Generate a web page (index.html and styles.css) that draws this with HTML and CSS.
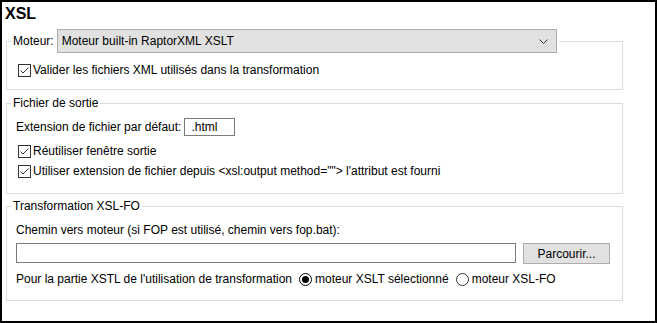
FILE: index.html
```
<!DOCTYPE html>
<html lang="fr">
<head>
  <meta charset="UTF-8" />
  <title>XSL</title>
  <link rel="stylesheet" href="styles.css">
</head>
<body>
  <div class="panel">
    <h1 class="title">XSL</h1>

    <fieldset class="group group-engine">
      <legend class="legend-engine">
        <span>Moteur:</span>
        <div class="combo">
          <span>Moteur built-in RaptorXML XSLT</span>
          <svg class="chevron" width="9" height="5" viewBox="0 0 9 5"><polyline points="0.5,0.5 4.5,4.5 8.5,0.5" fill="none" stroke="#333" stroke-width="1"/></svg>
        </div>
      </legend>
      <label class="check-row">
        <svg class="check" width="13" height="13" viewBox="0 0 13 13"><rect x="0.5" y="0.5" width="12" height="12" fill="#fff" stroke="#333"/><polyline points="2.5,6.5 5,9 10.5,3.5" fill="none" stroke="#333" stroke-width="1"/></svg>
        Valider les fichiers XML utilisés dans la transformation
      </label>
    </fieldset>

    <fieldset class="group group-output">
      <legend>Fichier de sortie</legend>
      <div class="ext-row">
        <span>Extension de fichier par défaut:</span>
        <div class="text-box ext-box">.html</div>
      </div>
      <label class="check-row row-first">
        <svg class="check" width="13" height="13" viewBox="0 0 13 13"><rect x="0.5" y="0.5" width="12" height="12" fill="#fff" stroke="#333"/><polyline points="2.5,6.5 5,9 10.5,3.5" fill="none" stroke="#333" stroke-width="1"/></svg>
        Réutiliser fenêtre sortie
      </label>
      <label class="check-row">
        <svg class="check" width="13" height="13" viewBox="0 0 13 13"><rect x="0.5" y="0.5" width="12" height="12" fill="#fff" stroke="#333"/><polyline points="2.5,6.5 5,9 10.5,3.5" fill="none" stroke="#333" stroke-width="1"/></svg>
        Utiliser extension de fichier depuis &lt;xsl:output method=""&gt; l'attribut est fourni
      </label>
    </fieldset>

    <fieldset class="group group-fo">
      <legend>Transformation XSL-FO</legend>
      <div class="text-row">Chemin vers moteur (si FOP est utilisé, chemin vers fop.bat):</div>
      <div class="path-row">
        <div class="text-box path-box"></div>
        <button class="browse">Parcourir...</button>
      </div>
      <div class="radio-row">
        <span>Pour la partie XSTL de l'utilisation de transformation</span>
        <label class="radio">
          <svg width="13" height="13" viewBox="0 0 13 13"><circle cx="6.5" cy="6.5" r="6" fill="#fff" stroke="#000"/><circle cx="6.5" cy="6.5" r="3.5" fill="#000"/></svg>
          moteur XSLT sélectionné
        </label>
        <label class="radio">
          <svg width="13" height="13" viewBox="0 0 13 13"><circle cx="6.5" cy="6.5" r="6" fill="#fff" stroke="#333"/></svg>
          moteur XSL-FO
        </label>
      </div>
    </fieldset>
  </div>
</body>
</html>
```

FILE: styles.css
```
body {
  margin: 0;
  font-family: 'Liberation Sans', Arial, sans-serif;
  font-size: 12px;
  color: #000;
  background: #fff;
}
.panel {
  width: 657px;
  height: 323px;
  box-sizing: border-box;
  border: 2px solid #000;
  padding: 0 32px 0 4px;
}
.title {
  margin: 0 0 0 -1px;
  font-size: 16px;
  font-weight: bold;
  line-height: 24px;
  height: 27px;
}
.group {
  margin: 0;
  padding: 0 9px;
  border: 1px solid #dcdcdc;
  min-width: 0;
}
.group legend {
  padding: 0 2px;
  margin-left: -5px;
  line-height: 16px;
}
.legend-engine {
  display: flex;
  align-items: center;
  gap: 3px;
}
.combo {
  height: 22px;
  border: 1px solid #adadad;
  background: #e1e1e1;
  display: flex;
  align-items: center;
  justify-content: space-between;
  padding: 0 8px 0 4px;
  width: 486px;
}
.group-engine {
  padding-top: 7px;
  padding-bottom: 9px;
}
.group-output {
  margin-top: 5px;
  padding-top: 6px;
  padding-bottom: 12px;
}
.group-fo {
  margin-top: 4px;
  padding-top: 6px;
  padding-bottom: 11px;
}
.check-row {
  display: flex;
  align-items: center;
  height: 20px;
  padding-left: 2px;
  gap: 2px;
}
.check {
  flex: none;
}
.ext-row {
  display: flex;
  align-items: center;
  height: 20px;
  gap: 3px;
}
.text-box {
  border: 1px solid #7a7a7a;
  background: #fff;
  box-sizing: border-box;
}
.ext-box {
  width: 51px;
  height: 18px;
  line-height: 16px;
  padding-left: 6px;
}
.row-first {
  margin-top: 4px;
}
.text-row {
  height: 20px;
  line-height: 20px;
}
.path-row {
  display: flex;
  margin-top: 3px;
  gap: 7px;
}
.path-box {
  width: 500px;
  height: 20px;
}
.browse {
  width: 87px;
  height: 21px;
  border: 1px solid #adadad;
  background: #e1e1e1;
  font-family: inherit;
  font-size: 12px;
  padding: 0;
  color: #000;
}
.radio-row {
  display: flex;
  align-items: center;
  height: 20px;
  margin-top: 5px;
  gap: 7px;
}
.radio {
  display: flex;
  align-items: center;
  gap: 3px;
}
```
